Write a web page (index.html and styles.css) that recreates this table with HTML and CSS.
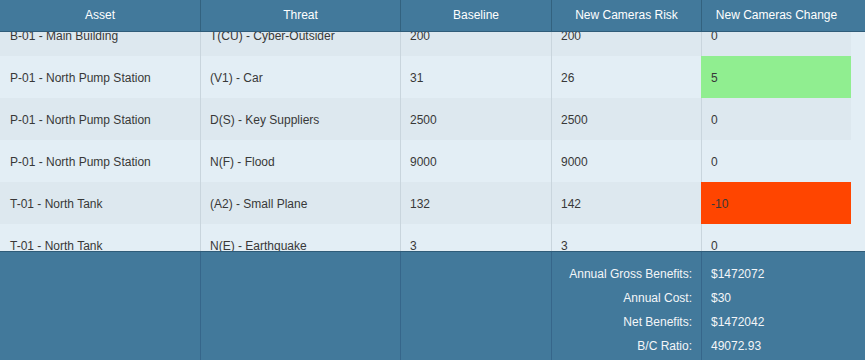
FILE: index.html
```html
<!DOCTYPE html>
<html>
<head>
<meta charset="utf-8">
<link rel="stylesheet" href="styles.css">
</head>
<body>
<div class="grid">
  <div class="head">
    <div class="hc">Asset</div>
    <div class="hc">Threat</div>
    <div class="hc">Baseline</div>
    <div class="hc">New Cameras Risk</div>
    <div class="hc">New Cameras Change</div>
    <div class="hc pad"></div>
  </div>
  <div class="viewport">
    <div class="rows">
      <div class="row odd"><div class="c">B-01 - Main Building</div><div class="c">T(CU) - Cyber-Outsider</div><div class="c">200</div><div class="c">200</div><div class="c">0</div></div>
      <div class="row even"><div class="c">P-01 - North Pump Station</div><div class="c">(V1) - Car</div><div class="c">31</div><div class="c">26</div><div class="c good">5</div></div>
      <div class="row odd"><div class="c">P-01 - North Pump Station</div><div class="c">D(S) - Key Suppliers</div><div class="c">2500</div><div class="c">2500</div><div class="c">0</div></div>
      <div class="row even"><div class="c">P-01 - North Pump Station</div><div class="c">N(F) - Flood</div><div class="c">9000</div><div class="c">9000</div><div class="c">0</div></div>
      <div class="row odd"><div class="c">T-01 - North Tank</div><div class="c">(A2) - Small Plane</div><div class="c">132</div><div class="c">142</div><div class="c bad">-10</div></div>
      <div class="row even"><div class="c">T-01 - North Tank</div><div class="c">N(E) - Earthquake</div><div class="c">3</div><div class="c">3</div><div class="c">0</div></div>
    </div>
  </div>
  <div class="foot">
    <div class="fc"></div>
    <div class="fc"></div>
    <div class="fc"></div>
    <div class="fc labels">
      <div class="line">Annual Gross Benefits:</div>
      <div class="line">Annual Cost:</div>
      <div class="line">Net Benefits:</div>
      <div class="line">B/C Ratio:</div>
    </div>
    <div class="fc values">
      <div class="line">$1472072</div>
      <div class="line">$30</div>
      <div class="line">$1472042</div>
      <div class="line">49072.93</div>
    </div>
    <div class="fc pad"></div>
  </div>
</div>
</body>
</html>
```

FILE: styles.css
```css
html, body {
  margin: 0;
  padding: 0;
}
body {
  width: 865px;
  height: 360px;
  overflow: hidden;
  font-family: "Liberation Sans", Arial, sans-serif;
  font-size: 12px;
  color: #383838;
}
.grid {
  display: flex;
  flex-direction: column;
  height: 360px;
}
.head {
  display: grid;
  grid-template-columns: 200px 200px 151px 150px 150px 14px;
  height: 31px;
  background: #42799b;
  border-bottom: 1px solid #2f5c79;
  color: #fff;
}
.hc {
  display: flex;
  align-items: center;
  justify-content: center;
  padding-bottom: 2px;
  border-left: 1px solid #33627f;
}
.hc:first-child {
  border-left: none;
}
.hc.pad {
  border-left: none;
}
.viewport {
  height: 219px;
  overflow: hidden;
  background: #e3eef5;
}
.rows {
  margin-top: -18px;
  width: 851px;
}
.row {
  display: grid;
  grid-template-columns: 200px 200px 151px 150px 150px;
  height: 42px;
}
.row.odd {
  background: #dde8ef;
}
.row.even {
  background: #e3eef5;
}
.c {
  display: flex;
  align-items: center;
  padding-left: 9px;
  padding-top: 2px;
  border-left: 1px solid #c9d5dd;
  white-space: nowrap;
}
.c:first-child {
  border-left: none;
  padding-left: 10px;
}
.c.good {
  background: #90ee90;
  border-left-color: #90ee90;
}
.c.bad {
  background: #ff4500;
  border-left-color: #ff4500;
}
.foot {
  flex: 1;
  display: grid;
  grid-template-columns: 200px 200px 151px 150px 150px 14px;
  background: #42799b;
  border-top: 1px solid #2f5c79;
  color: #f4f6f8;
}
.fc {
  border-left: 1px solid #36668a;
  padding-top: 10px;
}
.fc:first-child, .fc.pad {
  border-left: none;
}
.line {
  height: 24px;
  line-height: 24px;
  white-space: nowrap;
}
.labels {
  text-align: right;
  padding-right: 9px;
}
.values {
  padding-left: 9px;
}
```
